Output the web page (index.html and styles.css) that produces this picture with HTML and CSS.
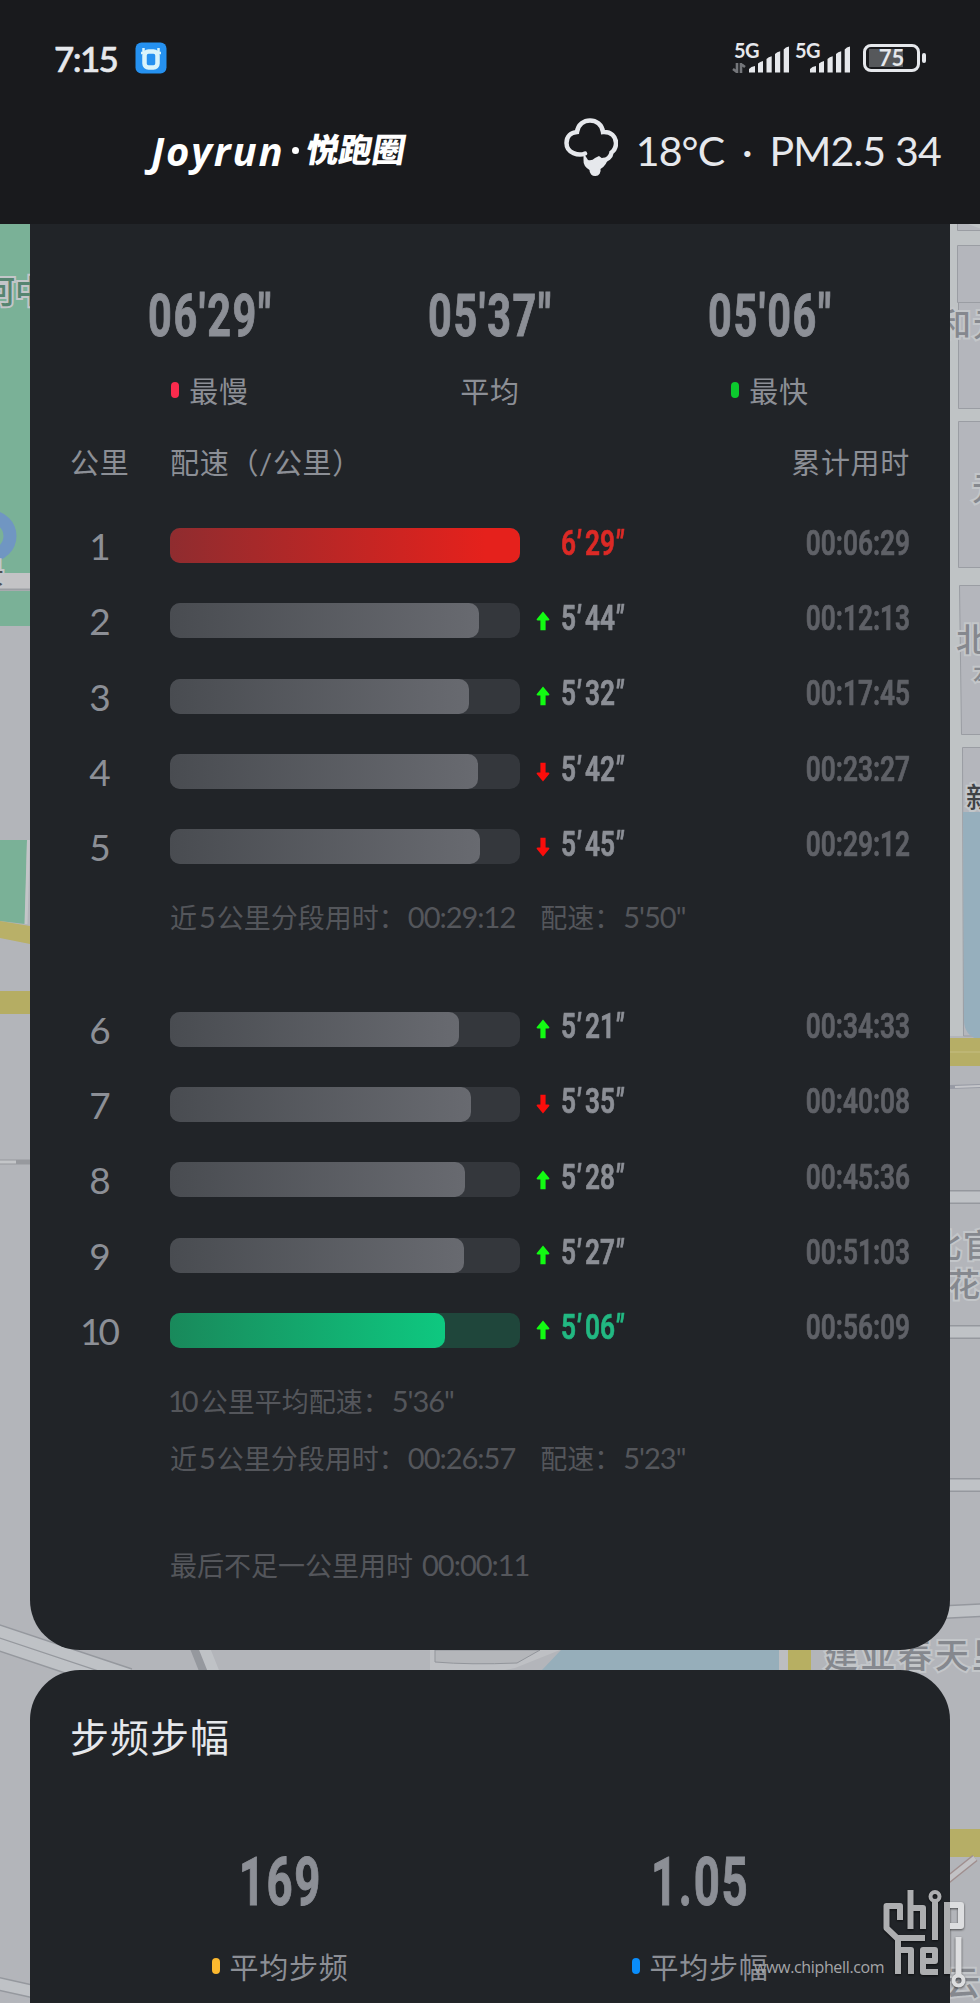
FILE: index.html
```html
<!DOCTYPE html>
<html lang="zh-CN">
<head>
<meta charset="UTF-8" />
<meta name="viewport" content="width=device-width, initial-scale=1" />
<title>Joyrun 悦跑圈</title>
<link rel="stylesheet" href="styles.css">
</head>
<body>

<!-- ICONS -->
<svg class="defs" width="0" height="0">
  <symbol id="arrow" viewBox="0 0 14 20">
    <path d="M7 0.5 L13.4 8.2 Q13.6 9.6 12 9.6 H9.6 V19.3 H4.4 V9.6 H2 Q0.4 9.6 0.6 8.2 Z" />
  </symbol>
  <symbol id="signal" viewBox="0 0 41 27">
    <path d="M0 26.5 V23 Q2 20.5 6 20 V26.5 Z M9 26.5 V17.5 Q11 15.5 14 15 V26.5 Z M17.5 26.5 V13 Q19.5 10.8 22.7 10.3 V26.5 Z M26 26.5 V8 Q28 5.8 31.2 5.3 V26.5 Z M34.7 26.5 V3.5 Q36.5 1 40 0.5 V26.5 Z" />
  </symbol>
</svg>

<!-- MAP -->
<svg class="map" viewBox="0 0 980 2003">
  <rect width="980" height="2003" fill="#b3b5ba" />
  <!-- left -->
  <rect y="224" width="30" height="349" fill="#7ab197" />
  <circle cx="-9" cy="536" r="19" fill="none" stroke="#7096c2" stroke-width="13" />
  <rect y="573" width="30" height="16" fill="#c3c3c5" />
  <path d="M0 589.500H30" stroke="#9b9ea3" stroke-width="2" />
  <rect y="591" width="30" height="35" fill="#7ab197" />
  <path d="M0 840H27L25 924L0 921Z" fill="#7ab197" />
  <path d="M28.500 840L26 924" stroke="#c3c5c8" stroke-width="3" />
  <path d="M0 921L30 926V944L0 938Z" fill="#b9b068" />
  <rect y="991" width="30" height="23" fill="#b5ad63" />
  <path d="M0 1162H30" stroke="#97999e" stroke-width="5" />
  <path d="M0 1162H16" stroke="#c3c5c8" stroke-width="3" />
  <g class="road">
    <path class="edge" d="M-5 1630L130 1675M-5 1643L100 1678M196 1645L210 1680" />
    <path d="M-5 1630L130 1675M-5 1643L100 1678M203 1645L217 1680" />
    <path class="edge" d="M-5 1983L40 1993" />
    <path d="M-5 1983L40 1993" />
  </g>
  <!-- between the cards -->
  <path d="M430 1650H560L515 1668L505 1670H430Z" fill="#bec0c4" />
  <path d="M435 1650H540L517 1663Q470 1665 435 1662Z" fill="#b4b6ba" stroke="#92959b" />
  <path d="M561 1650H780V1670H542Z" fill="#96aeba" />
  <rect x="779" y="1650" width="32" height="20" fill="#bcbdc0" />
  <rect x="788" y="1650" width="23" height="20" fill="#b7af62" />
  <!-- right -->
  <rect x="950" y="224" width="30" height="812" fill="#bfc3c5" />
  <g fill="#b4b6bc" stroke="#9a9da3">
    <path d="M957.500 220V230.500H985M957.500 245.500H985V302.500H957.500ZM958.500 302.500H985V408.500H958.500ZM958.500 421.500H985V567.500H958.500ZM959.500 585.500H985V734.500H961.500ZM962.500 747.500H985V1036H963.500Z" />
  </g>
  <path d="M963 812H980V1040Q964 1036 964 1020Z" fill="#96afbd" />
  <rect x="950" y="1038" width="30" height="28" fill="#b6ae66" />
  <path d="M950 1052H980" stroke="#c4bd82" />
  <path d="M950 1087L980 1086" stroke="#989ba5" stroke-width="4" />
  <path d="M955 1087L980 1086" stroke="#c5c6ca" stroke-width="2" />
  <g class="road">
    <path class="edge" d="M945 1197H985M945 1332H985M945 1485H985M945 1612L985 1610" />
    <path d="M945 1197H985M945 1332H985M945 1485H985M945 1612L985 1610" />
  </g>
  <rect x="950" y="1829" width="30" height="28" fill="#b6ae66" />
  <path d="M945 1882L975 1858" stroke="#a08f8f" stroke-width="8" />
  <path d="M945 1882L975 1858" stroke="#c2c2c5" stroke-width="5" />
  <g class="map-text">
    <text x="-17" y="303" fill="#558570">河中</text>
    <text x="-24" y="584" font-size="28" fill="#4e5154">景</text>
    <text x="939" y="336">和</text>
    <text x="973" y="336">元</text>
    <text x="972" y="500">元</text>
    <text x="956" y="651">北</text>
    <text x="973" y="683" font-size="24">本</text>
    <text x="966" y="808" font-size="28" fill="#3f4246">新</text>
    <text x="929" y="1257">北</text>
    <text x="963" y="1257">官</text>
    <text x="948" y="1296">花园</text>
    <text x="824" y="1668" font-size="34" letter-spacing="3">建亚春天里</text>
    <text x="946" y="1995" font-size="34">云</text>
  </g>
</svg>

<!-- HEADER -->
<div class="header">
  <div class="status-bar">
    <span class="clock">7:15</span>
    <svg class="app-icon" viewBox="0 0 32 32">
      <rect x="0.500" y="0.500" width="31" height="31" rx="6" fill="#2591f0" />
      <rect x="9.500" y="9.500" width="13" height="16" rx="4" fill="none" stroke="#d9f4fb" stroke-width="4.500" />
      <path d="M10 11L6 11M8.500 12V6M22 11H26M23.500 12V6" stroke="#d9f4fb" stroke-width="2.500" />
    </svg>
    <div class="status-right">
      <div class="network">
        <b>5G</b>
        <svg class="updown" viewBox="0 0 14 10"><path d="M5 0V10M5 9L1 6M9 10V0M9 1L13 4" fill="none" stroke="#74767a" stroke-width="2.600" /></svg>
        <svg class="signal"><use href="#signal" /></svg>
      </div>
      <div class="network">
        <b>5G</b>
        <svg class="signal"><use href="#signal" /></svg>
      </div>
      <div class="battery"><span>75</span></div>
    </div>
  </div>
  <div class="title-bar">
    <div class="logo"><span class="logo-en">Joyrun</span><span class="logo-dot"></span><span class="logo-cn">悦跑圈</span></div>
    <div class="weather">
      <svg class="weather-icon" viewBox="0 0 54 60">
        <path d="M21 35.500C15 38 2.500 35.500 2.500 25C2.500 18 7 14.500 13 14C15 -1.500 37 -1.500 39 14C47 13.500 52 18.500 52 25C52 30 49.500 33 47.500 34.500C47 39 43 42 39 42" fill="none" stroke="#e6e8ec" stroke-width="4.500" stroke-linecap="round" />
        <path d="M19.500 35L24 42Q28 43 31 40L35 38L39 41L44 40Q43 47 36.500 51A5.600 5.600 0 1 1 25.500 52Q19 48 19.500 42Z" fill="#e6e8ec" />
      </svg>
      <span>18°C</span><span>·</span><span>PM2.5 34</span>
    </div>
  </div>
</div>

<!-- PACE CARD -->
<div class="card pace-card">
  <div class="stats">
    <div class="stat"><div class="stat-value"><span>06'29"</span></div><div class="stat-label"><i class="dot red"></i>最慢</div></div>
    <div class="stat"><div class="stat-value"><span>05'37"</span></div><div class="stat-label">平均</div></div>
    <div class="stat"><div class="stat-value"><span>05'06"</span></div><div class="stat-label"><i class="dot green"></i>最快</div></div>
  </div>
  <div class="list-head">
    <span class="head-km">公里</span>
    <span>配速（/公里）</span>
    <span class="head-time">累计用时</span>
  </div>

  <div class="rows">
    <div class="row slowest">
      <span class="km">1</span>
      <div class="bar"><div class="fill" style="width: 100%"></div></div>
      <span class="arrow"></span>
      <span class="pace">6<i>'</i>29<i>"</i></span><span class="time">00:06:29</span>
    </div>
    <div class="row">
      <span class="km">2</span>
      <div class="bar"><div class="fill" style="width: 88.4%"></div></div>
      <svg class="arrow up"><use href="#arrow" /></svg>
      <span class="pace">5<i>'</i>44<i>"</i></span><span class="time">00:12:13</span>
    </div>
    <div class="row">
      <span class="km">3</span>
      <div class="bar"><div class="fill" style="width: 85.3%"></div></div>
      <svg class="arrow up"><use href="#arrow" /></svg>
      <span class="pace">5<i>'</i>32<i>"</i></span><span class="time">00:17:45</span>
    </div>
    <div class="row">
      <span class="km">4</span>
      <div class="bar"><div class="fill" style="width: 87.9%"></div></div>
      <svg class="arrow down"><use href="#arrow" /></svg>
      <span class="pace">5<i>'</i>42<i>"</i></span><span class="time">00:23:27</span>
    </div>
    <div class="row">
      <span class="km">5</span>
      <div class="bar"><div class="fill" style="width: 88.7%"></div></div>
      <svg class="arrow down"><use href="#arrow" /></svg>
      <span class="pace">5<i>'</i>45<i>"</i></span><span class="time">00:29:12</span>
    </div>
  </div>
  <div class="note first-note">近<b>5</b>公里分段用时：<b>00:29:12</b><span class="note-pace">配速：<b>5'50"</b></span></div>

  <div class="rows">
    <div class="row">
      <span class="km">6</span>
      <div class="bar"><div class="fill" style="width: 82.5%"></div></div>
      <svg class="arrow up"><use href="#arrow" /></svg>
      <span class="pace">5<i>'</i>21<i>"</i></span><span class="time">00:34:33</span>
    </div>
    <div class="row">
      <span class="km">7</span>
      <div class="bar"><div class="fill" style="width: 86.1%"></div></div>
      <svg class="arrow down"><use href="#arrow" /></svg>
      <span class="pace">5<i>'</i>35<i>"</i></span><span class="time">00:40:08</span>
    </div>
    <div class="row">
      <span class="km">8</span>
      <div class="bar"><div class="fill" style="width: 84.3%"></div></div>
      <svg class="arrow up"><use href="#arrow" /></svg>
      <span class="pace">5<i>'</i>28<i>"</i></span><span class="time">00:45:36</span>
    </div>
    <div class="row">
      <span class="km">9</span>
      <div class="bar"><div class="fill" style="width: 84.1%"></div></div>
      <svg class="arrow up"><use href="#arrow" /></svg>
      <span class="pace">5<i>'</i>27<i>"</i></span><span class="time">00:51:03</span>
    </div>
    <div class="row fastest">
      <span class="km">10</span>
      <div class="bar"><div class="fill" style="width: 78.7%"></div></div>
      <svg class="arrow up"><use href="#arrow" /></svg>
      <span class="pace">5<i>'</i>06<i>"</i></span><span class="time">00:56:09</span>
    </div>
  </div>
  <div class="note"><b class="ten">10</b>公里平均配速：<b>5'36"</b></div>
  <div class="note">近<b>5</b>公里分段用时：<b>00:26:57</b><span class="note-pace">配速：<b>5'23"</b></span></div>
  <div class="note last-note">最后不足一公里用时<b class="rest">00:00:11</b></div>
</div>

<!-- STEP CARD -->
<div class="card step-card">
  <h2>步频步幅</h2>
  <div class="stats">
    <div class="stat"><div class="stat-value"><span>169</span></div><div class="stat-label"><i class="dot yellow"></i>平均步频</div></div>
    <div class="stat"><div class="stat-value"><span>1.05</span></div><div class="stat-label"><i class="dot blue"></i>平均步幅</div></div>
  </div>
</div>

<!-- WATERMARK -->
<div class="watermark">
  <span>www.chiphell.com</span>
  <svg viewBox="0 0 84 100">
    <g fill="none" stroke-width="6" stroke-linejoin="round">
      <path d="M17 30V16H3.500V38L15 49V84M15 48H42M27.500 0V39M27.500 18H40V39M52 11V50M15 60H28V84M40 71H52V60H40V82H55" />
      <path d="M64 84V12" />
      <path class="light" d="M67 15H78V36H67M75.500 47V85" />
      <circle cx="52" cy="6.500" r="4.500" stroke-width="4" />
      <circle class="light" cx="75.500" cy="90.500" r="5" stroke-width="4" />
    </g>
  </svg>
</div>

</body>
</html>
```

FILE: styles.css
```css
* {
  box-sizing: border-box;
}
body {
  margin: 0;
  width: 980px;
  height: 2003px;
  position: relative;
  overflow: hidden;
  background: #b3b5ba;
  color: #8c8f96;
  font-family: Lato, "Noto Sans CJK SC", sans-serif;
}
.defs {
  position: absolute;
}
/* MAP */
.map {
  position: absolute;
  top: 0; left: 0;
  width: 980px;
  height: 2003px;
  z-index: -1;
}
.road path {
  fill: none;
  stroke: #bfc2c6;
  stroke-width: 11;
}
.road .edge {
  stroke: #95989e;
  stroke-width: 14;
}
.map-text text {
  font-family: "Noto Sans CJK SC", sans-serif;
  font-weight: 500;
  paint-order: stroke;
  stroke: #c3c6c9;
  stroke-width: 4px;
}
.map-text {
  font-size: 32px;
  fill: #85888e;
}
/* HEADER */
.header {
  height: 224px;
  background: #191a1d;
  color: #e6e8ec;
}
.status-bar {
  height: 116px;
  padding: 0 54px;
  display: flex;
  align-items: center;
}
.clock {
  width: 81px;
  font-size: 35px;
  font-weight: 500;
  letter-spacing: -1.6px;
  -webkit-text-stroke: 0.6px;
}
.app-icon {
  width: 32px;
  height: 32px;
}
.status-right {
  margin-left: auto;
  display: flex;
  align-items: center;
}
.network {
  width: 61px;
  height: 30px;
  position: relative;
}
.network b {
  display: block;
  font-size: 20px;
  line-height: 15px;
  letter-spacing: -0.5px;
}
.updown {
  position: absolute;
  left: -2px;
  bottom: 0;
  width: 14px;
  height: 10px;
}
.signal {
  position: absolute;
  left: 15px;
  bottom: 0;
  width: 41px;
  height: 27px;
  fill: #e6e8ec;
}
.battery {
  width: 57px;
  height: 28px;
  margin: 0 6px 0 7px;
  border: 3px solid #e6e8ec;
  border-radius: 8px;
  background: linear-gradient(#56585b, #56585b) 3px 2px / 34px 18px no-repeat;
  position: relative;
  text-align: center;
  font-size: 22px;
  font-weight: 700;
  line-height: 22px;
}
.battery::after {
  content: "";
  position: absolute;
  right: -9px;
  top: 6px;
  width: 4px;
  height: 10px;
  border-radius: 2px;
  background: #e6e8ec;
}
.title-bar {
  height: 68px;
  padding: 0 39px 0 151px;
  display: flex;
  align-items: center;
  justify-content: space-between;
}
.logo {
  display: flex;
  align-items: center;
  color: #fff;
}
.logo-en {
  width: 141px;
  font-family: "Open Sans", sans-serif;
  font-size: 40px;
  font-weight: 700;
  font-style: italic;
  letter-spacing: 1.8px;
}
.logo-dot {
  width: 7px;
  height: 7px;
  margin-right: 8px;
  border-radius: 50%;
  background: #fff;
}
.logo-cn {
  font-family: "Noto Sans CJK SC", sans-serif;
  font-size: 33px;
  font-weight: 900;
  transform: translateY(-2px) skewX(-10deg);
}
.weather {
  display: flex;
  align-items: center;
  font-size: 41px;
  letter-spacing: -0.8px;
  white-space: nowrap;
}
.weather-icon {
  width: 54px;
  height: 60px;
  margin: -5px 18px 0 0;
}
.weather span:nth-of-type(2) {
  width: 45px;
  text-align: center;
}
/* CARDS */
.card {
  width: 920px;
  margin: 0 30px;
  padding: 0 40px;
  background: #212428;
}
.pace-card {
  height: 1426px;
  padding-top: 57px;
  border-radius: 0 0 50px 50px;
}
.stats {
  display: flex;
}
.stat {
  flex: 1;
  text-align: center;
}
.stat-value {
  height: 70px;
  line-height: 70px;
  font-family: Roboto, sans-serif;
  font-size: 60px;
  font-weight: 700;
}
.stat-value span {
  display: inline-block;
  letter-spacing: 2.4px;
  -webkit-text-stroke: 1px;
  transform: scaleX(0.69);
}
.stat-label {
  height: 40px;
  margin-top: 19px;
  display: flex;
  align-items: center;
  justify-content: center;
  font-size: 29px;
  font-weight: 400;
  letter-spacing: 0.7px;
}
.dot {
  width: 8px;
  height: 16px;
  margin-right: 10px;
  border-radius: 4px;
}
.red { background: #fa2b4d; }
.green { background: #0cc92e; }
.yellow { background: #fbb82f; }
.blue { background: #0a8dfb; }
.list-head {
  height: 40px;
  margin: 31px 0 27px;
  display: flex;
  align-items: center;
  font-size: 29px;
  font-weight: 400;
  letter-spacing: 0.7px;
}
.head-km {
  width: 100px;
}
.head-time {
  margin-left: auto;
}
/* ROWS */
.row {
  height: 75.3px;
  display: flex;
  align-items: center;
}
.km {
  width: 60px;
  margin-right: 40px;
  text-align: center;
  font-size: 37px;
  letter-spacing: -3px;
  text-indent: -3px;
}
.bar {
  width: 350px;
  height: 35px;
  border-radius: 10px;
  background: #34373c;
}
.fill {
  height: 100%;
  border-radius: 10px;
  background: linear-gradient(90deg, #494c51, #686a70);
}
.slowest .fill {
  background: linear-gradient(90deg, #8f2c2f, #e5211c 90%);
}
.fastest .bar {
  background: #1f463b;
}
.fastest .fill {
  background: linear-gradient(90deg, #19895b, #0ec880);
}
.arrow {
  width: 14px;
  height: 20px;
  margin: 0 11px 0 16px;
}
.up {
  fill: #12fb12;
}
.down {
  fill: #fb0d0b;
  transform: rotate(180deg);
}
.pace,
.time {
  margin-top: -5px;
  font-family: Roboto, sans-serif;
  font-size: 35px;
  font-weight: 600;
  -webkit-text-stroke: 0.7px;
  transform: scaleX(0.75);
  transform-origin: left;
}
.pace i {
  display: inline-block;
  width: 12px;
}
.time {
  margin-left: auto;
  color: #5f6167;
  transform-origin: right;
}
.slowest .pace { color: #dc2a26; }
.fastest .pace { color: #22b882; }
/* NOTES */
.note {
  height: 57px;
  padding-left: 100px;
  display: flex;
  align-items: center;
  color: #54565b;
  font-size: 27px;
  font-weight: 400;
  position: relative;
  top: 4px;
}
.note b {
  font-size: 29px;
  font-weight: 400;
  letter-spacing: -1px;
  margin: 0 2px;
}
.note .ten {
  margin: 0 5px 0 -2px;
  letter-spacing: -3px;
}
.note-pace {
  margin-left: 23px;
}
.first-note {
  height: 107px;
  padding-bottom: 50px;
}
.last-note {
  margin-top: 50px;
}
.note .rest {
  padding-left: 7px;
}
/* STEP CARD */
.step-card {
  height: 400px;
  margin-top: 20px;
  padding-top: 44px;
  border-radius: 50px 50px 0 0;
}
.step-card h2 {
  margin: 0 0 100px;
  height: 46px;
  line-height: 46px;
  color: #e6e8ec;
  font-size: 39px;
  font-weight: 400;
  letter-spacing: 1px;
}
.step-card .stat-value {
  height: 46px;
  line-height: 46px;
  font-size: 66px;
}
.step-card .stat-label {
  margin-top: 40px;
}
/* WATERMARK */
.watermark {
  position: absolute;
  left: 754px;
  top: 1890px;
  display: flex;
  color: #a5a6a8;
}
.watermark span {
  width: 129px;
  padding-top: 66px;
  font-family: "Open Sans", sans-serif;
  font-size: 16px;
  letter-spacing: -0.35px;
}
.watermark svg {
  width: 84px;
  height: 100px;
  stroke: #adaeb0;
  filter: drop-shadow(0 1px 1px #0009);
}
.watermark .light {
  stroke: #dddee0;
}
```
